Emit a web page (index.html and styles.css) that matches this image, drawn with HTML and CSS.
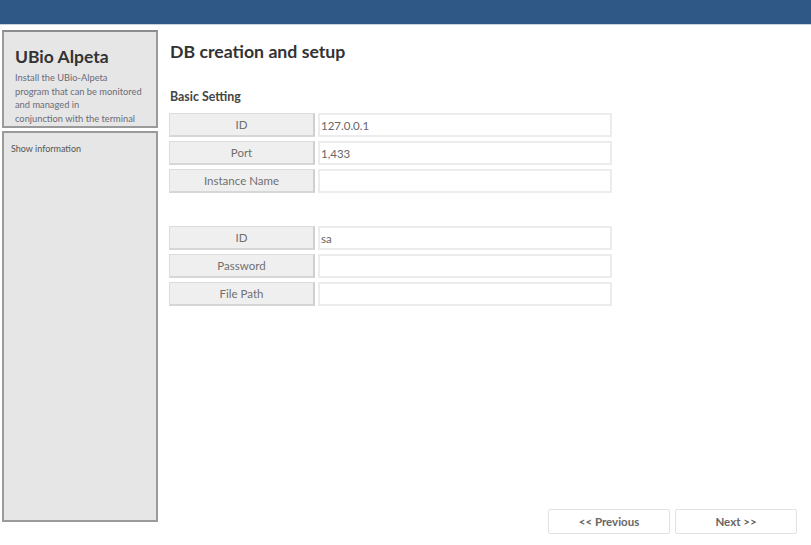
FILE: index.html
```html
<!DOCTYPE html>
<html>
<head>
<meta charset="utf-8">
<link rel="stylesheet" href="styles.css">
</head>
<body>
<div class="topbar"></div>
<div class="main">
  <aside class="sidebar">
    <div class="brand">
      <h1 class="brand-title">UBio Alpeta</h1>
      <p class="brand-desc">Install the UBio-Alpeta<br>program that can be monitored<br>and managed in<br>conjunction with the terminal</p>
    </div>
    <div class="info">Show information</div>
  </aside>
  <section class="content">
    <h2 class="title">DB creation and setup</h2>
    <h3 class="subtitle">Basic Setting</h3>
    <div class="form">
      <div class="row"><div class="label">ID</div><div class="field">127.0.0.1</div></div>
      <div class="row"><div class="label">Port</div><div class="field">1,433</div></div>
      <div class="row"><div class="label">Instance Name</div><div class="field"></div></div>
    </div>
    <div class="form form-second">
      <div class="row"><div class="label">ID</div><div class="field">sa</div></div>
      <div class="row"><div class="label">Password</div><div class="field"></div></div>
      <div class="row"><div class="label">File Path</div><div class="field"></div></div>
    </div>
    <div class="spacer"></div>
    <div class="buttons">
      <button class="btn">&lt;&lt; Previous</button>
      <button class="btn">Next &gt;&gt;</button>
    </div>
  </section>
</div>
</body>
</html>
```
FILE: styles.css
```css
html, body {
  margin: 0;
  padding: 0;
  background: #ffffff;
  font-family: Lato, "Open Sans", "Liberation Sans", sans-serif;
  color: #555;
}
body {
  width: 811px;
  height: 545px;
  overflow: hidden;
}
.topbar {
  height: 24px;
  background: #2f5886;
  border-bottom: 1px solid #c9d3df;
}
.main {
  display: flex;
  box-sizing: border-box;
  padding: 5px 0 0 2px;
  height: 520px;
}
.sidebar {
  width: 156px;
  display: flex;
  flex-direction: column;
  gap: 3px;
  flex-shrink: 0;
}
.brand {
  box-sizing: border-box;
  height: 98px;
  background: #e6e6e6;
  border: 2px solid #9a9a9a;
  border-top-color: #8c8c8c;
  padding: 14px 4px 0 11px;
}
.brand-title {
  margin: 0;
  font-size: 17.5px;
  font-weight: 700;
  color: #333;
  line-height: 22px;
}
.brand-desc {
  margin: 3px 0 0;
  font-size: 9.3px;
  line-height: 13.7px;
  color: #6b6b78;
  white-space: nowrap;
}
.info {
  flex: 1;
  margin-bottom: 23px;
  background: #e6e6e6;
  border: 2px solid #9a9a9a;
  padding: 10px 0 0 7px;
  font-size: 9px;
  color: #555;
}
.content {
  flex: 1;
  display: flex;
  flex-direction: column;
  padding-left: 11px;
}
.title {
  margin: 11px 0 0 1px;
  font-size: 17.7px;
  font-weight: 700;
  color: #333;
  line-height: 22px;
}
.subtitle {
  margin: 26px 0 0 1px;
  font-size: 12.4px;
  font-weight: 700;
  color: #444;
  line-height: 16px;
}
.form {
  display: flex;
  flex-direction: column;
  gap: 4px;
  margin-top: 8px;
}
.form-second {
  margin-top: 33px;
}
.row {
  display: flex;
  gap: 3px;
  height: 24px;
}
.label {
  width: 146px;
  box-sizing: border-box;
  background: #efefef;
  border: 1px solid #dcdcdc;
  border-right: 2px solid #cfcfcf;
  border-bottom: 2px solid #d6d6d6;
  font-size: 11.5px;
  color: #707070;
  display: flex;
  align-items: center;
  justify-content: center;
}
.field {
  width: 294px;
  box-sizing: border-box;
  background: #fff;
  border: 2px solid #ececec;
  font-size: 11.5px;
  color: #666;
  display: flex;
  align-items: center;
  padding-left: 1px;
}
.spacer {
  flex: 1;
}
.buttons {
  display: flex;
  justify-content: flex-end;
  gap: 5px;
  padding-right: 14px;
  margin-bottom: 11px;
}
.btn {
  width: 122px;
  height: 25px;
  background: #fff;
  border: 1px solid #e2e2e2;
  border-radius: 2px;
  font-family: inherit;
  font-size: 11.5px;
  font-weight: 700;
  color: #666;
  padding: 0;
}
```
